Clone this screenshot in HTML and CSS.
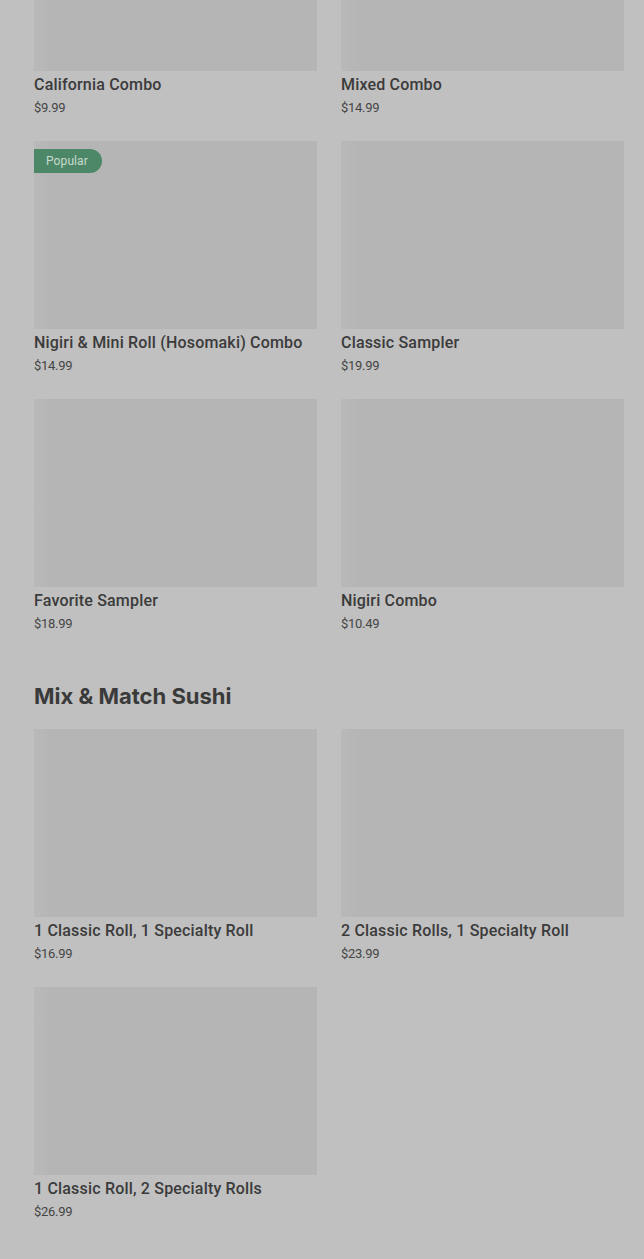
FILE: index.html
```html
<!DOCTYPE html>
<html lang="en">
<head>
  <meta charset="UTF-8">
  <meta name="viewport" content="width=device-width, initial-scale=1.0">
  <title>Menu</title>
  <link rel="stylesheet" href="styles.css">
</head>
<body>
  <div class="page">
    <section class="section first">
      <div class="grid">
        <div class="card">
          <div class="thumb"></div>
          <h3>California Combo</h3>
          <p class="price">$9.99</p>
        </div>
        <div class="card">
          <div class="thumb"></div>
          <h3>Mixed Combo</h3>
          <p class="price">$14.99</p>
        </div>
        <div class="card">
          <div class="thumb"><span class="badge">Popular</span></div>
          <h3>Nigiri &amp; Mini Roll (Hosomaki) Combo</h3>
          <p class="price">$14.99</p>
        </div>
        <div class="card">
          <div class="thumb"></div>
          <h3>Classic Sampler</h3>
          <p class="price">$19.99</p>
        </div>
        <div class="card">
          <div class="thumb"></div>
          <h3>Favorite Sampler</h3>
          <p class="price">$18.99</p>
        </div>
        <div class="card">
          <div class="thumb"></div>
          <h3>Nigiri Combo</h3>
          <p class="price">$10.49</p>
        </div>
      </div>
    </section>

    <section class="section">
      <h2>Mix &amp; Match Sushi</h2>
      <div class="grid">
        <div class="card">
          <div class="thumb"></div>
          <h3>1 Classic Roll, 1 Specialty Roll</h3>
          <p class="price">$16.99</p>
        </div>
        <div class="card">
          <div class="thumb"></div>
          <h3>2 Classic Rolls, 1 Specialty Roll</h3>
          <p class="price">$23.99</p>
        </div>
        <div class="card">
          <div class="thumb"></div>
          <h3>1 Classic Roll, 2 Specialty Rolls</h3>
          <p class="price">$26.99</p>
        </div>
      </div>
    </section>
  </div>
</body>
</html>
```

FILE: styles.css
```css
body {
  margin: 0;
  background-color: #c0c0c0;
  color: #3b3b3b;
  font-family: 'Roboto', sans-serif;
}

.page {
  padding: 0 20px 40px 34px;
  overflow: hidden;
  height: 1259px;
  box-sizing: border-box;
}

.section.first {
  margin-top: -117px;
}

.section + .section {
  margin-top: 49px;
}

h2 {
  font-family: 'Inter', sans-serif;
  font-size: 22px;
  line-height: 28px;
  font-weight: 700;
  letter-spacing: 0;
  margin: 0 0 19px;
  color: #3a3a3a;
}

.grid {
  display: grid;
  grid-template-columns: 283px 283px;
  column-gap: 24px;
  row-gap: 24px;
}

.thumb {
  position: relative;
  height: 188px;
  background: linear-gradient(90deg, #b9b9b9 0%, #b5b5b5 6%, #b5b5b5 100%);
}

.badge {
  position: absolute;
  top: 8px;
  left: 0;
  height: 24px;
  line-height: 24px;
  padding: 0 14px 0 12px;
  background-color: #4c8868;
  color: #c9d9cf;
  font-size: 12px;
  letter-spacing: 0.1px;
  border-radius: 0 12px 12px 0;
}

h3 {
  margin: 4px 0 0;
  font-size: 16px;
  line-height: 20px;
  font-weight: 500;
  letter-spacing: 0.18px;
  color: #3b3b3b;
}

.price {
  margin: 4px 0 0;
  font-size: 13px;
  line-height: 18px;
  color: #454545;
  letter-spacing: -0.3px;
}
```
